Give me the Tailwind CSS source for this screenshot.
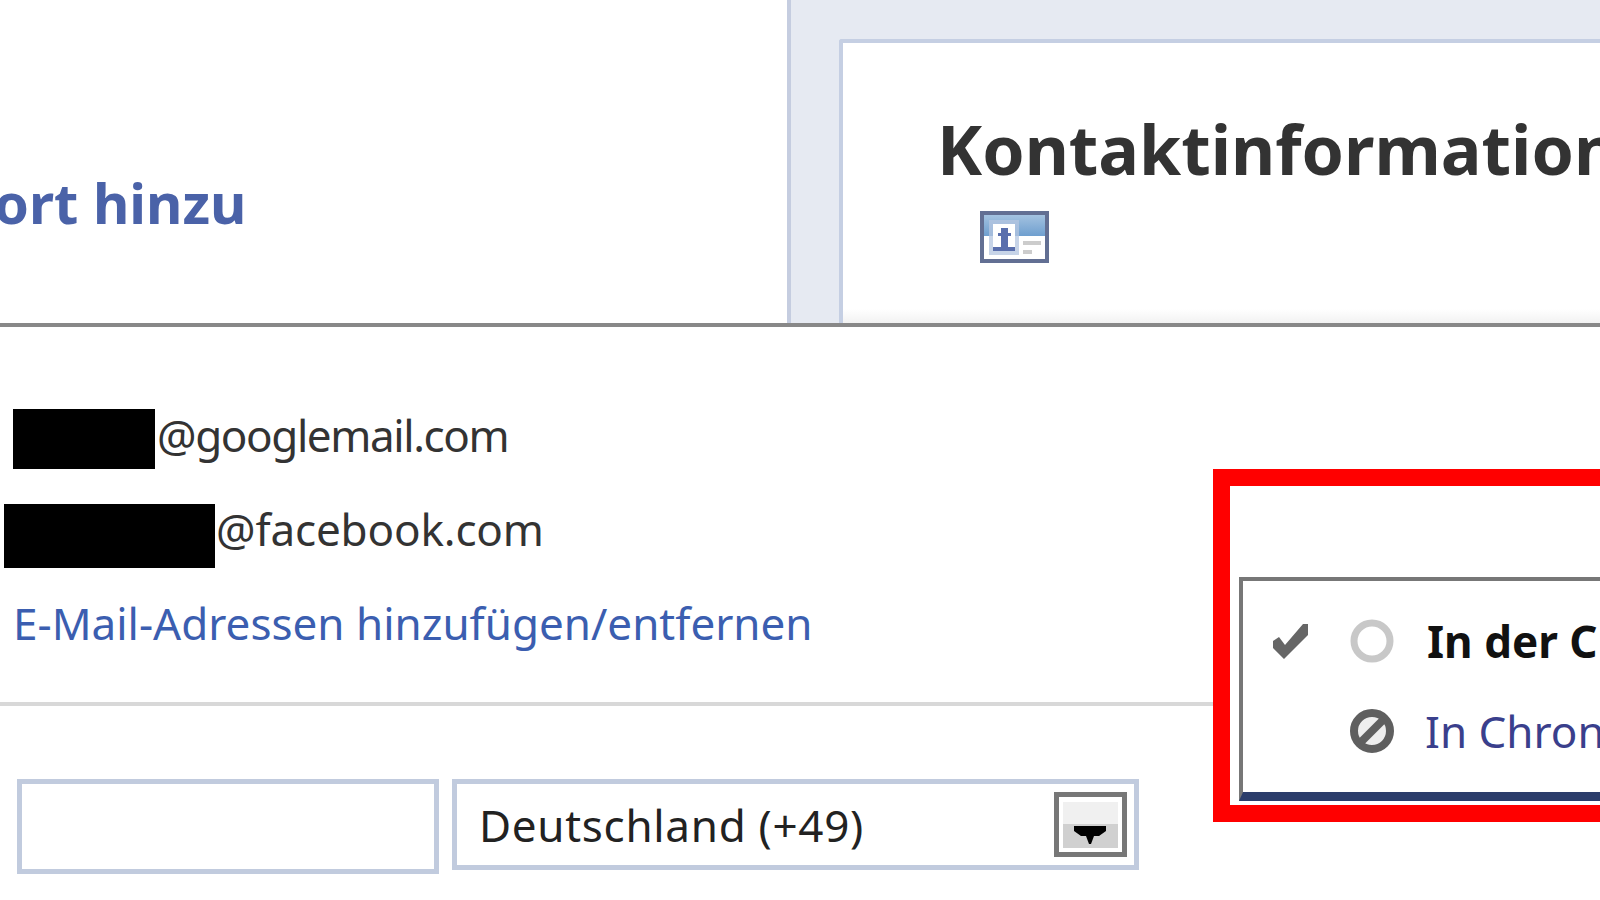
<!DOCTYPE html>
<html lang="de">
<head>
  <meta charset="UTF-8" />
  <title>Kontaktinformationen</title>
  <script src="https://cdn.jsdelivr.net/npm/@tailwindcss/browser@4"></script>
</head>
<body class="relative h-[900px] w-[1600px] overflow-hidden bg-white font-['Noto_Sans','DejaVu_Sans',sans-serif] text-[#333]">
  <!-- top part of the page -->
  <header class="flex h-[327px] border-b-4 border-[#888]">
    <div class="flex w-[787px] shrink-0 justify-start overflow-hidden pt-[164px]">
      <a class="-ml-[6px] whitespace-nowrap text-[56px] leading-[76px] font-bold text-[#4a62a8]">ort hinzu</a>
    </div>
    <div class="flex-1 border-l-4 border-[#c5cde0] bg-[#e6eaf2] pt-[39px] pl-[48px]">
      <section class="h-full overflow-hidden rounded-tl-[3px] border-t-4 border-l-4 border-[#c5cfe3] bg-linear-to-b from-white from-95% to-[#f2f2f2] pt-[60px] pl-[94px]">
        <h2 class="whitespace-nowrap text-[68px] leading-[92px] font-bold text-[#333]">Kontaktinformationen</h2>
        <svg class="mt-[16px] ml-[43px]" width="69" height="52" viewBox="0 0 69 52">
          <defs>
            <linearGradient id="cardTop" x1="0" y1="0" x2="0" y2="1">
              <stop offset="0" stop-color="#a3c2e0" />
              <stop offset="1" stop-color="#6f9fcf" />
            </linearGradient>
          </defs>
          <rect x="2" y="2" width="65" height="48" fill="#fff" stroke="#626f93" stroke-width="4" />
          <rect x="4" y="4" width="61" height="21" fill="url(#cardTop)" />
          <rect x="9" y="9" width="30" height="35" fill="#b4c6e0" opacity="0.75" />
          <rect x="13" y="13" width="22" height="26" fill="#fff" />
          <path d="M21 17h7v5h3v3h-3v11h7v4H13v-4h8V25h-3v-3h3z" fill="#5a6fad" />
          <rect x="43" y="30" width="18" height="4" fill="#ccc" />
          <rect x="43" y="39" width="9" height="4" fill="#ccc" />
        </svg>
      </section>
    </div>
  </header>

  <!-- e-mail rows -->
  <main class="pt-[80px]">
    <div class="flex h-[64px] items-center pl-[13px]">
      <span class="h-[60px] w-[142px] shrink-0 bg-black"></span>
      <span class="ml-[2px] pb-[8px] text-[44px] leading-[60px] tracking-[-1.4px]">@googlemail.com</span>
    </div>
    <div class="mt-[33px] flex h-[64px] items-center pl-[4px]">
      <span class="h-[64px] w-[211px] shrink-0 bg-black"></span>
      <span class="ml-[1px] pb-[14px] text-[44px] leading-[60px] tracking-[-0.15px]">@facebook.com</span>
    </div>
    <a class="mt-[25px] block pl-[13px] text-[44px] leading-[60px] text-[#3b5eb0]">E-Mail-Adressen hinzufügen/entfernen</a>
    <div class="mt-[49px] h-[4px] w-[1213px] bg-[#d8d8d8]"></div>

    <!-- phone row -->
    <div class="mt-[73px] flex items-start gap-[13px] pl-[17px]">
      <div class="h-[95px] w-[422px] border-[5px] border-[#c1cbde] bg-white"></div>
      <div class="flex h-[91px] w-[687px] items-center justify-between border-[5px] border-[#c1cbde] bg-white pr-[7px] pl-[22px]">
        <span class="text-[44px] leading-[60px] tracking-[0.7px] text-[#222]">Deutschland (+49)</span>
        <div class="flex h-[65px] w-[73px] flex-col justify-end border-[5px] border-[#777] bg-white p-[4px] pt-[5px]">
          <div class="relative h-[47px] bg-linear-to-b from-[#f0f0f0] from-47% to-[#d0d0d0] to-47%">
            <svg class="absolute bottom-[4px] left-[11px]" width="32" height="18" viewBox="0 0 32 18"><path d="M0 0h32v5l-7 5h-5l-3 8h-2l-3-8H7L0 5z" fill="#000" /></svg>
          </div>
        </div>
      </div>
    </div>
  </main>

  <!-- red annotation frame with the visibility menu -->
  <div class="absolute top-[469px] left-[1213px] h-[353px] w-[500px] border-[17px] border-[#f00] bg-white pt-[91px] pl-[9px]">
    <div class="flex h-[224px] flex-col border-t-4 border-b-[9px] border-l-4 border-t-[#777] border-b-[#2b3d6b] border-l-[#777] bg-white">
      <div class="flex h-[118px] items-center pt-[2px]">
        <svg class="ml-[30px] shrink-0" width="35" height="35" viewBox="0 0 35 35"><path d="M0 17l6-4 6 8L30 0h5v11L11 35 0 24z" fill="#666" /></svg>
        <svg class="ml-[42px] shrink-0" width="44" height="44" viewBox="0 0 44 44"><circle cx="22" cy="22" r="18" fill="#fff" stroke="#c8c8c8" stroke-width="7" /></svg>
        <span class="ml-[33px] whitespace-nowrap text-[44px] leading-[60px] font-bold text-[#111]">In der Chronik</span>
      </div>
      <div class="-mt-[12px] flex h-[88px] items-center">
        <svg class="ml-[107px] shrink-0" width="44" height="44" viewBox="0 0 44 44">
          <circle cx="22" cy="22" r="18" fill="#eee" stroke="#5f5f5f" stroke-width="8" />
          <path d="M10 34L34 10" stroke="#5f5f5f" stroke-width="8" />
        </svg>
        <span class="ml-[31px] whitespace-nowrap text-[44px] leading-[60px] text-[#3a3f8c]">In Chronik verbergen</span>
      </div>
    </div>
  </div>
</body>
</html>
